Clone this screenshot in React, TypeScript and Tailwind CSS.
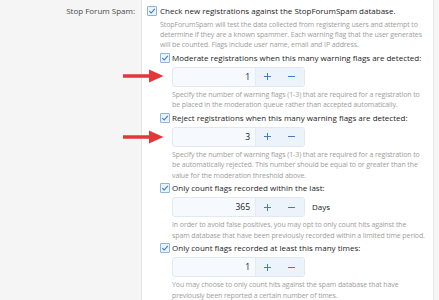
import React from "react";

/* ── Small pieces ───────────────────────────────────────────────────── */
function Check() {
  return (
    <span className="flex h-[10px] w-[10px] flex-shrink-0 items-center justify-center rounded-[1px] border border-[#8fb4da] bg-[#eaf2fb]">
      <svg width="8" height="8" viewBox="0 0 8 8">
        <path d="M1.3 4.2L3.2 6L6.8 1.9" stroke="#3d7cc0" strokeWidth="1.1" fill="none" />
      </svg>
    </span>
  );
}

function Stepper({ value, suffix }: { value: string; suffix?: string }) {
  return (
    <div className="mt-[2px] flex items-center">
      <div className="flex h-[20px] w-[133px] overflow-hidden rounded-[3px] border border-[#e1e8f0] bg-[#f6f9fd]">
        <div className="flex flex-1 items-center justify-end pr-[5px] text-[8.5px] text-[#222]">{value}</div>
        <div className="relative flex w-[24px] items-center justify-center border-l border-[#e4ebf3] bg-[#edf3fa]">
          <span className="block h-[1px] w-[7px] bg-[#3f7fc1]" />
          <span className="absolute h-[7px] w-[1px] bg-[#3f7fc1]" />
        </div>
        <div className="flex w-[25px] items-center justify-center bg-[#edf3fa]">
          <span className="block h-[1px] w-[7px] bg-[#3f7fc1]" />
        </div>
      </div>
      {suffix && <span className="ml-[7px] text-[8px] text-[#222]">{suffix}</span>}
    </div>
  );
}

function Help({ lines }: { lines: string[] }) {
  return (
    <div className="mt-[3px] text-[7px] leading-[10.3px] tracking-[-0.1px] text-[#9d9d9d]">
      {lines.map((l, i) => (
        <div key={i} className="whitespace-nowrap">
          {l}
        </div>
      ))}
    </div>
  );
}

function Option({ label, value, suffix, help }: { label: string; value: string; suffix?: string; help: string[] }) {
  return (
    <div className="mt-[0.5px]">
      <div className="flex h-[14px] items-center gap-[2px]">
        <Check />
        <span className="whitespace-nowrap text-[8px] leading-[14px] text-[#1d1d1d]">{label}</span>
      </div>
      <div className="pl-[12px]">
        <Stepper value={value} suffix={suffix} />
        <Help lines={help} />
      </div>
    </div>
  );
}

function Arrow({ top }: { top: string }) {
  return (
    <svg className={`absolute left-[122px] ${top}`} width="42" height="14" viewBox="0 0 42 14">
      <path d="M1 5.2H27V0.5L41.5 7L27 13.5V8.8H1Z" fill="#e2383a" />
    </svg>
  );
}

/* ── Page ───────────────────────────────────────────────────────────── */
export default function App() {
  return (
    <div
      className="relative flex h-[300px] w-[439px] overflow-hidden bg-white"
      style={{ fontFamily: '"Open Sans", "Noto Sans", sans-serif' }}
    >
      <div className="w-[142px] flex-shrink-0 border-r border-[#e4e4e4] bg-[#f5f5f5] pr-[6px] pt-[3.5px] text-right text-[8px] leading-[14px] text-[#4a4a4a]">
        Stop Forum Spam:
      </div>

      <div className="min-w-0 flex-1 pl-[5px] pt-[3.5px]">
        <div className="flex gap-[3px]">
          <div className="flex h-[14px] items-center">
            <Check />
          </div>
          <div className="min-w-0 flex-1">
            <div className="h-[13px] whitespace-nowrap text-[8px] leading-[14px] text-[#1d1d1d]">
              Check new registrations against the StopForumSpam database.
            </div>
            <Help
              lines={[
                "StopForumSpam will test the data collected from registering users and attempt to",
                "determine if they are a known spammer. Each warning flag that the user generates",
                "will be counted. Flags include user name, email and IP address.",
              ]}
            />

            <Option
              label="Moderate registrations when this many warning flags are detected:"
              value="1"
              help={[
                "Specify the number of warning flags (1-3) that are required for a registration to",
                "be placed in the moderation queue rather than accepted automatically.",
              ]}
            />
            <Option
              label="Reject registrations when this many warning flags are detected:"
              value="3"
              help={[
                "Specify the number of warning flags (1-3) that are required for a registration to",
                "be automatically rejected. This number should be equal to or greater than the",
                "value for the moderation threshold above.",
              ]}
            />
            <Option
              label="Only count flags recorded within the last:"
              value="365"
              suffix="Days"
              help={[
                "In order to avoid false positives, you may opt to only count hits against the",
                "spam database that have been previously recorded within a limited time period.",
              ]}
            />
            <Option
              label="Only count flags recorded at least this many times:"
              value="1"
              help={[
                "You may choose to only count hits against the spam database that have",
                "previously been reported a certain number of times.",
              ]}
            />
          </div>
        </div>
      </div>

      <div className="w-[6px] flex-shrink-0 border-l border-[#e6e6e6] bg-[#f5f5f5]" />

      <Arrow top="top-[69px]" />
      <Arrow top="top-[130px]" />
    </div>
  );
}
